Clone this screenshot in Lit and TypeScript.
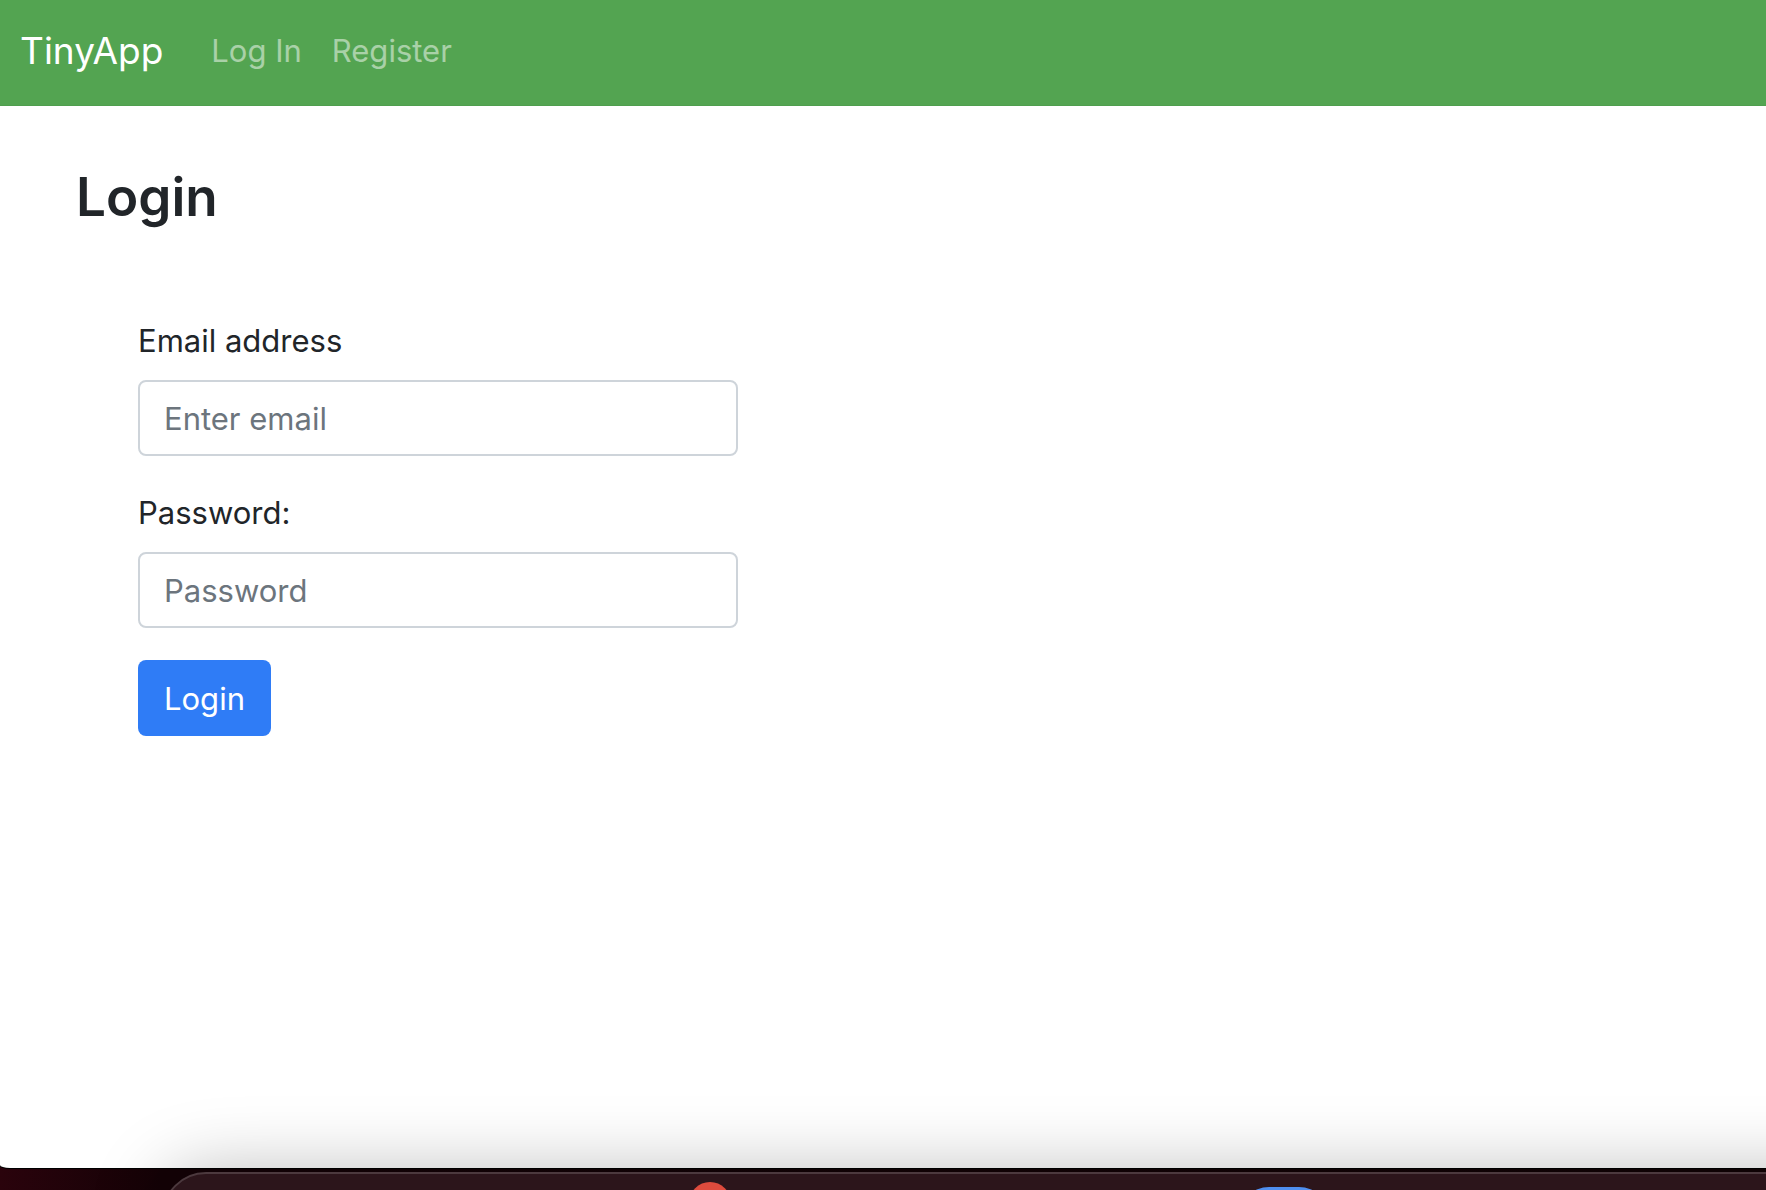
import { LitElement, html, css } from "lit";
import { customElement } from "lit/decorators.js";

const base = css`
  *,
  *::before,
  *::after {
    box-sizing: border-box;
  }
`;

@customElement("nav-bar")
class NavBar extends LitElement {
  static styles = [
    base,
    css`
      :host {
        display: block;
      }
      .bar {
        display: flex;
        align-items: center;
        gap: 48px;
        height: 106px;
        padding: 0 20px 4px;
        background: #53a451;
        border-bottom: 1px solid #4f9e4e;
      }
      .brand {
        font-size: 37px;
        line-height: 60px;
        color: #fff;
        text-decoration: none;
      }
      .links {
        display: flex;
        gap: 30px;
      }
      .link {
        font-size: 31px;
        line-height: 50px;
        color: rgba(255, 255, 255, 0.5);
        text-decoration: none;
      }
    `,
  ];

  render() {
    return html`
      <nav class="bar">
        <a class="brand" href="#">TinyApp</a>
        <div class="links">
          <a class="link" href="#login">Log In</a>
          <a class="link" href="#register">Register</a>
        </div>
      </nav>
    `;
  }
}

@customElement("login-form")
class LoginForm extends LitElement {
  static styles = [
    base,
    css`
      :host {
        display: block;
      }
      .title {
        margin: 0;
        padding: 57px 76px 0;
        font-size: 53px;
        line-height: 68px;
        font-weight: 600;
      }
      .form {
        display: flex;
        flex-direction: column;
        align-items: flex-start;
        gap: 32px;
        padding: 85px 138px 0;
      }
      .group {
        display: flex;
        flex-direction: column;
        gap: 14px;
        width: 100%;
        max-width: 600px;
      }
      .label {
        font-size: 31px;
        line-height: 50px;
      }
      .field {
        width: 100%;
        height: 76px;
        padding: 0 24px;
        border: 2px solid #ced4da;
        border-radius: 8px;
        background: #fff;
        color: #495057;
        font: inherit;
        font-size: 31px;
      }
      .field::placeholder {
        color: #6c757d;
        opacity: 1;
      }
      .submit {
        height: 76px;
        padding: 0 26px;
        border: 0;
        border-radius: 8px;
        background: #2f7cf6;
        color: #fff;
        font: inherit;
        font-size: 31px;
      }
    `,
  ];

  render() {
    return html`
      <h1 class="title">Login</h1>
      <form class="form" @submit=${(e: Event) => e.preventDefault()}>
        <div class="group">
          <label class="label" for="email">Email address</label>
          <input class="field" id="email" type="email" placeholder="Enter email" />
        </div>
        <div class="group">
          <label class="label" for="password">Password:</label>
          <input class="field" id="password" type="password" placeholder="Password" />
        </div>
        <button class="submit" type="submit">Login</button>
      </form>
    `;
  }
}

@customElement("app-root")
class AppRoot extends LitElement {
  static styles = [
    base,
    css`
      :host {
        display: block;
        font-family: Inter, "Liberation Sans", sans-serif;
        color: #212529;
      }
      .desktop {
        position: relative;
        display: flex;
        flex-direction: column;
        min-height: 100vh;
        padding-bottom: 22px;
        overflow: hidden;
        background: linear-gradient(to right, #2a030c, #140206 160px, #120305);
      }
      .window {
        flex: 1;
        background: #fff;
        border-bottom-left-radius: 10px 3px;
        box-shadow: 0 1px 0 #000;
      }
      .dock {
        position: absolute;
        left: 162px;
        right: -162px;
        bottom: -82px;
        height: 100px;
        border: 2px solid #4c393e;
        border-radius: 44px;
        background: #2c151b;
        box-shadow: 0 0 72px rgba(0, 0, 0, 0.27);
      }
      .badge {
        position: absolute;
        left: 525px;
        top: 8px;
        width: 42px;
        height: 42px;
        border-radius: 50%;
        background: #de4b3d;
      }
      .app {
        position: absolute;
        left: 1075px;
        top: 13px;
        width: 90px;
        height: 80px;
        border-radius: 30px;
        background: #4f8ff0;
      }
    `,
  ];

  render() {
    return html`
      <div class="desktop">
        <main class="window">
          <nav-bar></nav-bar>
          <login-form></login-form>
        </main>
        <div class="dock">
          <span class="badge"></span>
          <span class="app"></span>
        </div>
      </div>
    `;
  }
}
